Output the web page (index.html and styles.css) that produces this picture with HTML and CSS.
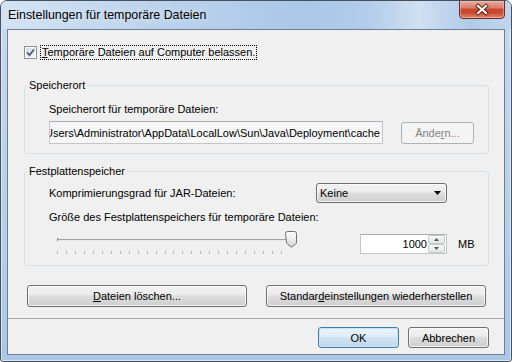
FILE: index.html
```html
<!DOCTYPE html>
<html>
<head>
    <meta charset="utf-8">
    <title>Einstellungen für temporäre Dateien</title>
    <link rel="stylesheet" href="styles.css">
</head>
<body>
    <div class="window">
        <div class="titlebar">
            <span class="title">Einstellungen für temporäre Dateien</span>
            <a class="close" href="javascript:;">
                <svg width="44" height="18" viewBox="0 0 44 18">
                    <path d="M18 5l8 7M26 5l-8 7" stroke="#5b1c12" stroke-width="4" stroke-linecap="square"/>
                    <path d="M18 5l8 7M26 5l-8 7" stroke="#fff" stroke-width="2.2" stroke-linecap="square"/>
                </svg>
            </a>
        </div>
        <div class="client">
            <div class="content">
                <label class="check-row">
                    <span class="checkbox">
                        <svg width="11" height="11" viewBox="0 0 11 11">
                            <path d="M2 5.5l2.5 2.6L9 2.5" fill="none" stroke="#4a5a82" stroke-width="1.8"/>
                        </svg>
                    </span>
                    <span class="focus"><u>T</u>emporäre Dateien auf Computer belassen.</span>
                </label>

                <fieldset class="group first">
                    <legend>Speicherort</legend>
                    <div class="label">Speicherort für temporäre Dateien:</div>
                    <div class="path-row">
                        <div class="path"><span>C:\Users\Administrator\AppData\LocalLow\Sun\Java\Deployment\cache</span></div>
                        <button class="btn disabled">Ände<u>r</u>n...</button>
                    </div>
                </fieldset>

                <fieldset class="group second">
                    <legend>Festplattenspeicher</legend>
                    <div class="combo-row">
                        <span>Komprimierungsgrad für JAR-Dateien:</span>
                        <div class="combo">
                            <span>Keine</span>
                            <svg width="7" height="4" viewBox="0 0 7 4"><path d="M0 0h7L3.5 4z" fill="#000"/></svg>
                        </div>
                    </div>
                    <div class="label gap">Größe des Festplattenspeichers für temporäre Dateien:</div>
                    <div class="size-row">
                        <svg class="slider" width="242" height="26" viewBox="0 0 242 26">
                            <path d="M1 10.5h233" stroke="#a3a3a3"/>
                            <path d="M1 11.5h233" stroke="#e8e8e8"/>
                            <path d="M1.5 9v3" stroke="#8a8a8a"/>
                            <path d="M1.5 22v3M10.5 22v3M19.5 22v3M28.5 22v3M37.5 22v3M46.5 22v3M55.5 22v3M64.5 22v3M73.5 22v3M82.5 22v3M91.5 22v3M100.5 22v3M109.5 22v3M117.5 22v3M126.5 22v3M135.5 22v3M144.5 22v3M153.5 22v3M162.5 22v3M171.5 22v3M180.5 22v3M189.5 22v3M198.5 22v3M207.5 22v3M216.5 22v3M225.5 22v3" stroke="#b4b4b4"/>
                            <defs>
                                <linearGradient id="thumb" x1="0" y1="0" x2="0" y2="1">
                                    <stop offset="0" stop-color="#fbfbfb"/>
                                    <stop offset="0.55" stop-color="#ececec"/>
                                    <stop offset="1" stop-color="#cfcfcf"/>
                                </linearGradient>
                            </defs>
                            <path d="M229.5 4.5q0-2 2-2h7q2 0 2 2v8.5q0 1.5-1.5 2.6l-2.5 2q-1 .8-2 0l-2.5-2q-1.5-1.1-1.5-2.6z" fill="url(#thumb)" stroke="#707070"/>
                        </svg>
                        <div class="spin">
                            <span class="spin-value">1000</span>
                            <div class="spin-btns">
                                <span class="spin-btn"><svg width="5" height="3" viewBox="0 0 5 3"><path d="M0 3h5L2.5 0z" fill="#555"/></svg></span>
                                <span class="spin-btn"><svg width="5" height="3" viewBox="0 0 5 3"><path d="M0 0h5L2.5 3z" fill="#555"/></svg></span>
                            </div>
                        </div>
                        <span class="unit">MB</span>
                    </div>
                </fieldset>

                <div class="actions">
                    <button class="btn wide"><u>D</u>ateien löschen...</button>
                    <button class="btn wide">Standar<u>d</u>einstellungen wiederherstellen</button>
                </div>
            </div>
            <div class="footer">
                <button class="btn small default">OK</button>
                <button class="btn small">Abbrechen</button>
            </div>
        </div>
    </div>
</body>
</html>
```

FILE: styles.css
```css
* {
    margin: 0;
    padding: 0;
    box-sizing: border-box;
}

body {
    font: 11px "Liberation Sans", Arial, sans-serif;
    color: #000;
    background: #fff;
}

u {
    text-decoration: underline;
    text-underline-offset: 1px;
}

.window {
    width: 512px;
    height: 362px;
    display: flex;
    flex-direction: column;
    border: 1px solid #48505c;
    border-radius: 7px 7px 3px 3px;
    background: linear-gradient(#c6daf0, #bcd3ed 40%, #aac7e7);
    box-shadow: inset 0 0 0 1px rgba(255, 255, 255, 0.55);
    overflow: hidden;
}

.titlebar {
    height: 28px;
    display: flex;
    justify-content: space-between;
    align-items: flex-start;
    padding: 0 6px 0 7px;
    background: linear-gradient(to right, #d3e3f4, #bcd3ec 30%, #aac7e8 60%, #b3cdea 72%, #cfe0f2 82%, #b0cbe9 92%, #c2d7ee);
}

.title {
    margin-top: 6px;
    font-size: 12.4px;
    line-height: 16px;
    color: #000;
    text-shadow: 0 0 6px #e4eef9;
}

.close {
    display: flex;
    justify-content: center;
    width: 46px;
    height: 19px;
    margin-top: -1px;
    border: 1px solid #6b2a22;
    border-radius: 0 0 4px 4px;
    background: linear-gradient(#e9aa9c, #d87f6b 40%, #c8462d 50%, #c94a31 70%, #e08a6e);
    box-shadow: inset 0 0 0 1px rgba(255, 210, 200, 0.45);
}

.client {
    flex: 1;
    margin: 0 6px 6px;
    display: flex;
    flex-direction: column;
    border: 1px solid #6e7f93;
    background: #f0f0f0;
}

.content {
    padding: 15px 15px 11px 16px;
}

.check-row {
    display: flex;
    align-items: center;
    height: 15px;
}

.checkbox {
    width: 13px;
    height: 13px;
    border: 1px solid #8e8f8f;
    background: linear-gradient(135deg, #d5d8dc, #f7f7f7);
    box-shadow: inset 0 0 0 1px #fff;
}

.checkbox svg {
    display: block;
}

.focus {
    margin-left: 3px;
    padding: 0 1px;
    height: 15px;
    line-height: 13px;
    border: 1px dotted #000;
}

.group {
    margin-top: 18px;
    padding: 9px 0 9px 24px;
    border: 1px solid #d5dfe5;
    border-radius: 3px;
    min-width: 0;
}

.group legend {
    margin-left: -22px;
    padding: 0 2px;
    line-height: 15px;
}

.group.second {
    margin-top: 10px;
    padding-top: 4px;
    padding-bottom: 10px;
}

.label {
    line-height: 15px;
}

.label.gap {
    margin-top: 7px;
}

.path-row {
    display: flex;
    align-items: flex-start;
    margin-top: 4px;
}

.path {
    width: 334px;
    height: 23px;
    display: flex;
    justify-content: flex-end;
    align-items: center;
    padding-right: 2px;
    overflow: hidden;
    white-space: nowrap;
    border: 1px solid #c3c6cc;
    border-top-color: #abadb3;
    background: #f6f6f6;
}

.btn {
    font: inherit;
    height: 22px;
    color: #000;
    border: 1px solid #707070;
    border-radius: 3px;
    background: linear-gradient(#f2f2f2, #ebebeb 45%, #dddddd 50%, #cfcfcf);
    box-shadow: inset 0 0 0 1px rgba(255, 255, 255, 0.7);
}

.btn.disabled {
    width: 73px;
    margin: 1px 0 0 18px;
    color: #838383;
    border-color: #adb2b5;
    background: #f4f4f4;
    box-shadow: none;
}

.combo-row {
    display: flex;
    justify-content: space-between;
    align-items: center;
    padding-right: 41px;
}

.combo {
    width: 131px;
    height: 20px;
    display: flex;
    justify-content: space-between;
    align-items: center;
    padding: 0 5px 0 3px;
    border: 1px solid #707070;
    border-radius: 3px;
    background: linear-gradient(#f2f2f2, #ebebeb 45%, #dddddd 50%, #cfcfcf);
    box-shadow: inset 0 0 0 1px rgba(255, 255, 255, 0.7);
}

.size-row {
    display: flex;
    align-items: flex-start;
    margin-top: 4px;
}

.slider {
    display: block;
    margin-left: 7px;
}

.spin {
    width: 87px;
    height: 20px;
    margin: 5px 0 0 62px;
    display: flex;
    align-items: stretch;
    border: 1px solid #c3c6cc;
    border-top-color: #abadb3;
    background: #fff;
}

.spin-value {
    flex: 1;
    text-align: right;
    line-height: 18px;
    padding-right: 1px;
}

.spin-btns {
    width: 17px;
    margin-right: 1px;
    display: flex;
    flex-direction: column;
}

.spin-btn {
    flex: 1;
    display: flex;
    justify-content: center;
    align-items: center;
    border: 1px solid #c4c8ce;
    border-radius: 2px;
    background: linear-gradient(#f7f7f7, #e6e6e6);
}

.spin-btn svg {
    display: block;
}

.unit {
    margin: 5px 0 0 11px;
    line-height: 20px;
}

.actions {
    display: flex;
    gap: 19px;
    margin-top: 19px;
    padding-left: 3px;
}

.btn.wide {
    width: 220px;
}

.footer {
    flex: 1;
    display: flex;
    justify-content: flex-end;
    align-items: flex-start;
    gap: 9px;
    padding: 8px 15px 0 0;
    border-top: 1px solid #a8a8a8;
}

.btn.small {
    width: 81px;
    height: 21px;
}

.btn.default {
    border-color: #3c7fb1;
    background: linear-gradient(#eaf4fb, #e0edf8 45%, #d0e3f3 50%, #c2d8ec);
    box-shadow: inset 0 0 0 1px #c6e6f8;
}
```
